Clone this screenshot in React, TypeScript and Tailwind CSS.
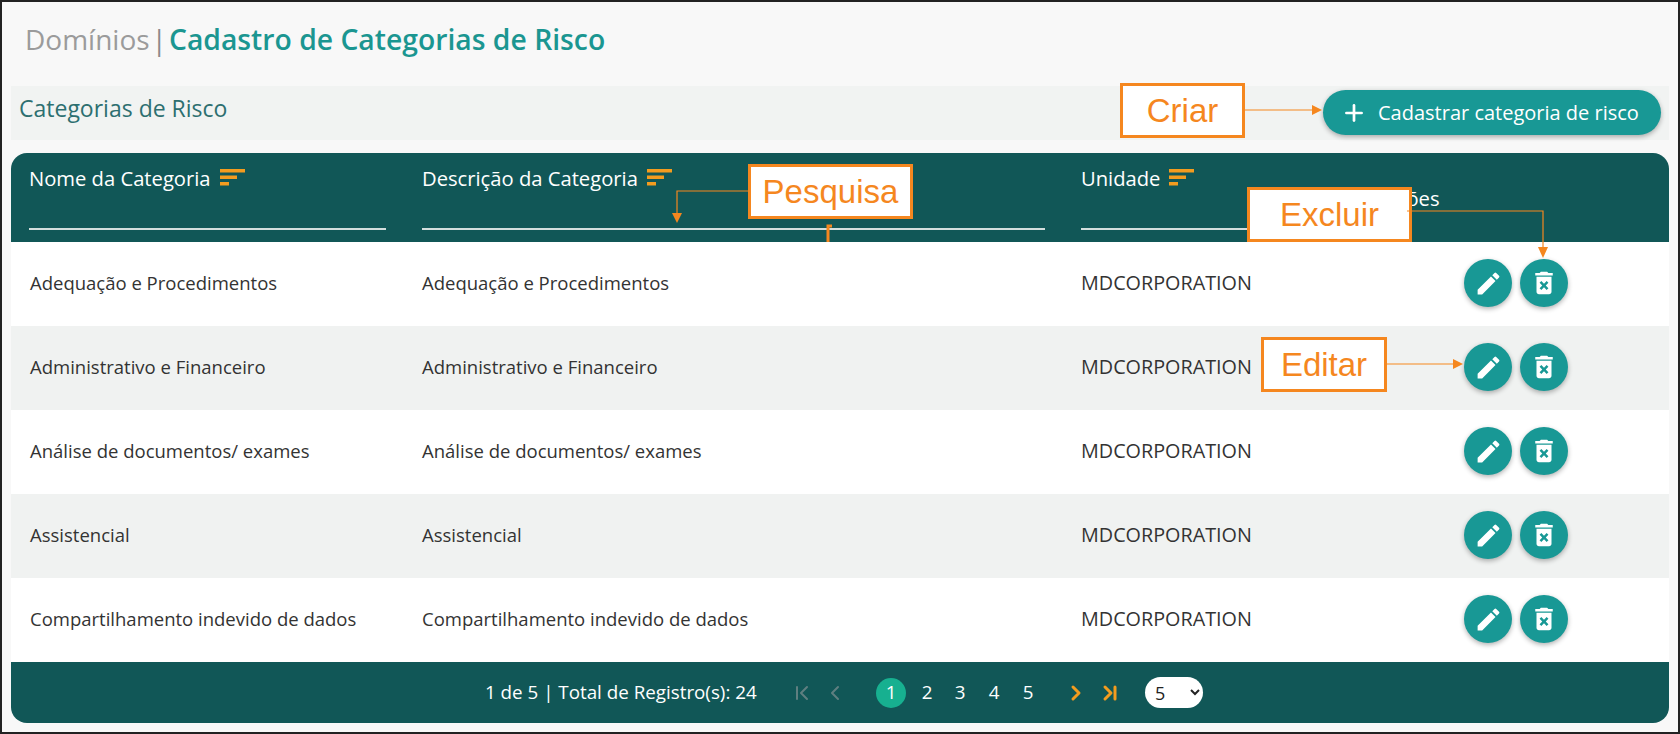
import { ChevronFirst, ChevronLast, ChevronLeft, ChevronRight, Plus } from 'lucide-react';
import { MdDeleteForever, MdEdit } from 'react-icons/md';

const rows = [
  'Adequação e Procedimentos',
  'Administrativo e Financeiro',
  'Análise de documentos/ exames',
  'Assistencial',
  'Compartilhamento indevido de dados',
];

const SortIcon = () => (
  <svg width="25" height="17" viewBox="0 0 25 17" className="shrink-0">
    <rect x="0" y="0" width="25" height="3.5" fill="#f39c1f" />
    <rect x="0" y="6.5" width="17" height="3.5" fill="#f39c1f" />
    <rect x="0" y="13" width="9" height="3.5" fill="#f39c1f" />
  </svg>
);

const HeaderCell = ({ label, className }: { label: string; className: string }) => (
  <div className={className}>
    <div className="flex h-[52px] items-start gap-[9px] pt-[11px] text-[20.2px] leading-[28px] text-white">
      {label}
      <span className="mt-[5px]">
        <SortIcon />
      </span>
    </div>
    <div className="mt-[23px] h-[2px] bg-[#d3dedd]" />
  </div>
);

const RoundButton = ({ children }: { children: React.ReactNode }) => (
  <button className="flex h-[48px] w-[48px] items-center justify-center rounded-full bg-[#189895] text-white shadow-[0_2px_5px_rgba(0,0,0,0.3)]">
    {children}
  </button>
);

const Callout = ({ label, className }: { label: string; className: string }) => (
  <div
    className={`absolute z-20 flex items-center justify-center border-[3px] border-[#f5871f] bg-white font-['Liberation_Sans',sans-serif] text-[33px] text-[#f5871f] ${className}`}
  >
    {label}
  </div>
);

export default function App() {
  return (
    <div className="relative h-[734px] w-[1680px] overflow-hidden border-x-2 border-t-2 border-b-2 border-[#222] bg-[#f8f8f8] font-['Open_Sans',sans-serif]">
      <div className="flex h-[84px] items-center pb-[10px] pl-[23px] text-[28px] leading-none">
        <span className="text-[#9b9b9b]">Domínios</span>
        <span className="mx-[2px] text-[#8a8a8a]">|</span>
        <span className="text-[28.3px] font-semibold text-[#1b9691]">Cadastro de Categorias de Risco</span>
      </div>

      <div className="mx-[9px] flex h-[54px] items-start justify-between bg-[#f1f3f2] pr-[8px] pl-[8px]">
        <span className="pt-[8px] text-[23px] leading-[28px] text-[#2d6f70]">Categorias de Risco</span>
        <button className="mt-[4px] flex h-[45px] w-[338px] items-center gap-[11px] rounded-full bg-[#189895] pl-[18px] text-[20px] text-white shadow-[0_2px_5px_rgba(0,0,0,0.3)]">
          <Plus size={26} strokeWidth={2.5} />
          Cadastrar categoria de risco
        </button>
      </div>

      <div className="mx-[9px] mt-[13px] overflow-hidden rounded-[16px]">
        <div className="grid h-[89px] grid-cols-[411px_659px_303px_1fr] bg-[#115757]">
          <HeaderCell label="Nome da Categoria" className="pr-[36px] pl-[18px]" />
          <HeaderCell label="Descrição da Categoria" className="pr-[36px]" />
          <HeaderCell label="Unidade" className="" />
          <div className="pt-[31px] text-[20.2px] leading-[28px] text-white">Ações</div>
        </div>

        {rows.map((row, i) => (
          <div
            key={row}
            className={`grid h-[84px] grid-cols-[411px_659px_383px_1fr] items-center pb-[2px] text-[18.5px] text-[#333] ${
              i % 2 === 1 ? 'bg-[#f0f2f1]' : 'bg-white'
            }`}
          >
            <div className="pl-[19px]">{row}</div>
            <div>{row}</div>
            <div className="text-[19.8px]">MDCORPORATION</div>
            <div className="flex gap-[8px]">
              <RoundButton>
                <MdEdit size={29} />
              </RoundButton>
              <RoundButton>
                <MdDeleteForever size={30} />
              </RoundButton>
            </div>
          </div>
        ))}

        <div className="flex h-[61px] items-center bg-[#115757] pl-[474px] text-[18.8px] text-white">
          <span className="w-[305px] whitespace-nowrap">1 de 5 | Total de Registro(s): 24</span>
          <ChevronFirst size={24} className="text-[#5f7f80]" />
          <ChevronLeft size={24} className="ml-[9px] text-[#5f7f80]" />
          <div className="ml-[29px] flex items-center">
            <span className="mr-[3px] flex h-[30px] w-[30px] items-center justify-center rounded-full bg-[#17b090]">1</span>
            <span className="w-[34px] pl-[2px] text-center">2</span>
            <span className="w-[34px] text-center">3</span>
            <span className="w-[34px] text-center">4</span>
            <span className="w-[34px] text-center">5</span>
          </div>
          <ChevronRight size={24} strokeWidth={3} className="ml-[19px] text-[#f39c1f]" />
          <ChevronLast size={24} strokeWidth={3} className="ml-[10px] text-[#f39c1f]" />
          <select className="ml-[23px] h-[31px] w-[58px] rounded-full bg-white pl-[6px] text-[18px] text-[#222]" defaultValue="5">
            <option>5</option>
          </select>
        </div>
      </div>

      {/* anotacoes por cima da tela */}
      <Callout label="Criar" className="top-[81px] left-[1118px] h-[55px] w-[125px]" />
      <Callout label="Pesquisa" className="top-[162px] left-[746px] h-[55px] w-[165px]" />
      <Callout label="Excluir" className="top-[185px] left-[1245px] h-[55px] w-[165px]" />
      <Callout label="Editar" className="top-[335px] left-[1259px] h-[55px] w-[126px]" />

      <svg className="pointer-events-none absolute top-0 left-0 z-30" width="1680" height="734">
        <g fill="none" stroke="#f5871f" strokeWidth="1.2">
          <path d="M1243 108H1312" />
          <path d="M746 189H675V212" />
          <path d="M1405 209H1541V246" />
          <path d="M1385 362H1453" />
        </g>
        <g fill="#f5871f">
          <path d="M1310 103L1320 108L1310 113Z" />
          <path d="M670 211L680 211L675 221Z" />
          <path d="M1536 245L1546 245L1541 256Z" />
          <path d="M1451 357L1461 362L1451 367Z" />
        </g>
        <path d="M826 240V224H830" fill="none" stroke="#f5871f" strokeWidth="3" />
      </svg>
    </div>
  );
}
